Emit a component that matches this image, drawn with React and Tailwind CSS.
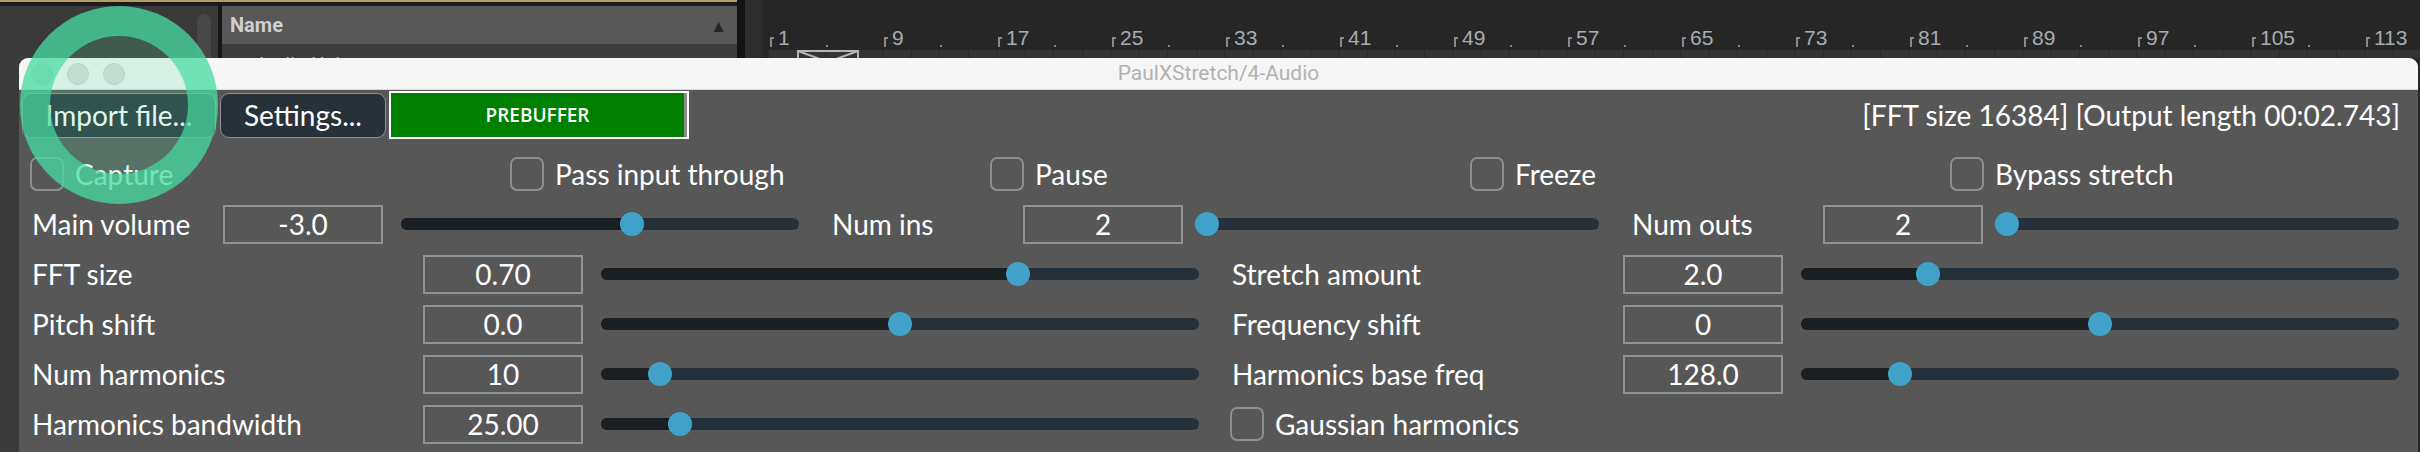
import React from "react";

const UI = { fontFamily: "Lato, 'Open Sans', sans-serif" };
const RULER = { fontFamily: "'Liberation Sans', Arial, sans-serif" };
const TITLE = { fontFamily: "Roboto, 'Liberation Sans', sans-serif" };

const rulerLabels = [1, 9, 17, 25, 33, 41, 49, 57, 65, 73, 81, 89, 97, 105, 113];

function Slider({ className, value }) {
  const w = className.includes("598") ? 598 : 398;
  const pos = 6 + value * (w - 12);
  return (
    <div className={"relative h-[24px] shrink-0 " + className}>
      <div className="absolute left-0 right-0 top-[6px] h-[12px] rounded-full bg-[#25313a]" />
      <div
        className="absolute left-0 top-[6px] h-[12px] rounded-l-full bg-[#1a1f23]"
        style={{ width: pos }}
      />
      <div
        className="absolute top-0 h-[24px] w-[24px] rounded-full bg-[#41a2c9]"
        style={{ left: pos - 12 }}
      />
    </div>
  );
}

function ValueBox({ children }) {
  return (
    <div className="flex h-[39px] w-[160px] shrink-0 items-center justify-center border-2 border-[#8b9595] text-[28px] leading-none text-white">
      {children}
    </div>
  );
}

function Check({ label }) {
  return (
    <div className="flex items-center">
      <div className="h-[34px] w-[34px] shrink-0 rounded-[7px] border-2 border-[#8e8e8e]" />
      <span className="ml-[11px] text-[28px] leading-none text-white">{label}</span>
    </div>
  );
}

function Group3({ label, value }) {
  return (
    <div className="flex w-[767px] items-center">
      <span className="w-[191px] shrink-0 text-[28px] leading-none text-white">{label}</span>
      <ValueBox>{value}</ValueBox>
      <div className="ml-[18px]">
        <Slider className="w-[398px]" value={0} />
      </div>
    </div>
  );
}

function Group2({ label, value, pos }) {
  return (
    <div className="flex w-[1167px] items-center">
      <span className="w-[391px] shrink-0 text-[28px] leading-none text-white">{label}</span>
      <ValueBox>{value}</ValueBox>
      <div className="ml-[18px]">
        <Slider className="w-[598px]" value={pos} />
      </div>
    </div>
  );
}

function RulerSeg({ n }) {
  return (
    <div className="relative flex h-[50px] w-[114px] shrink-0 items-start">
      <div className="mt-[37px] h-[10px] w-[4px] border-l-2 border-t-2 border-[#8a8a8a]" />
      <span className="ml-[4px] mt-[27px] text-[21px] leading-none text-[#a6acb2]">{n}</span>
      <div className="absolute left-[56px] top-[45px] h-[2px] w-[2px] bg-[#8a8a8a]" />
    </div>
  );
}

export default function App() {
  const cells = Array.from({ length: 60 });
  return (
    <div className="relative h-[452px] w-[2420px] overflow-hidden bg-[#262626]" style={UI}>
      {/* DAW background */}
      <div className="flex h-full w-full">
        {/* left panel */}
        <div className="flex h-full w-[218px] shrink-0 flex-col bg-[#3a3a3a]">
          <div className="h-[2px] w-full bg-[#b59b6c]" />
          <div className="h-[4px] w-full bg-[#1c1c1c]" />
          <div className="flex flex-1 justify-end pr-[7px] pt-[8px]">
            <div className="h-[200px] w-[14px] rounded-full bg-[#474747]" />
          </div>
        </div>
        <div className="flex h-full w-[4px] shrink-0 flex-col bg-[#161616]">
          <div className="h-[2px] w-full bg-[#b59b6c]" />
        </div>
        {/* browser panel */}
        <div className="flex h-full w-[515px] shrink-0 flex-col bg-[#3d3d3d]">
          <div className="h-[2px] w-full bg-[#b59b6c]" />
          <div className="h-[4px] w-full bg-[#1c1c1c]" />
          <div className="flex h-[38px] items-center justify-between bg-[#585858] pl-[8px] pr-[10px]">
            <span className="text-[20px] font-bold text-[#cfcfcf]" style={TITLE}>Name</span>
            <span className="text-[17px] leading-none text-[#262626]">▲</span>
          </div>
          <div className="flex items-center pl-[10px] pt-[6px] text-[20px] text-[#b8b8b8]" style={TITLE}>
            <span className="text-[13px]">▼</span>
            <span className="ml-[10px]">Audio Units</span>
          </div>
        </div>
        <div className="h-full w-[8px] shrink-0 bg-[#141414]" />
        <div className="h-full w-[17px] shrink-0 bg-[#2d2d2d]" />
        {/* timeline */}
        <div className="flex flex-1 flex-col" style={RULER}>
          <div className="flex pl-[8px]">
            {rulerLabels.map((n) => (
              <RulerSeg key={n} n={n} />
            ))}
          </div>
          <div className="relative flex h-[8px] pl-[6px]">
            {cells.map((_, i) => (
              <div key={i} className="h-[8px] w-[28.5px] shrink-0 border-l border-[#262626] bg-[#333333]" />
            ))}
            <svg className="absolute left-[35px] top-0" width="62" height="8" viewBox="0 0 62 8">
              <path d="M1 8 V1 H61 V8 M1 1 L31 12 M61 1 L31 12" stroke="#b5b5b5" strokeWidth="2" fill="none" />
            </svg>
          </div>
        </div>
      </div>

      {/* Plugin window */}
      <div className="absolute left-[19px] top-[58px] flex h-[394px] w-[2399px] flex-col overflow-hidden rounded-t-[9px] bg-[#575757]">
        <div className="grid h-[32px] shrink-0 grid-cols-[1fr_auto_1fr] items-center border-b border-[#d9d9d9] bg-[#f6f6f6]">
          <div className="flex items-center gap-[14px] pl-[12px]">
            <div className="h-[22px] w-[22px] rounded-full border border-[#cfcfcf] bg-[#dddddd]" />
            <div className="h-[22px] w-[22px] rounded-full border border-[#cfcfcf] bg-[#dddddd]" />
            <div className="h-[22px] w-[22px] rounded-full border border-[#cfcfcf] bg-[#dddddd]" />
          </div>
          <span className="text-[21px] leading-none text-[#b2b2b2]" style={TITLE}>PaulXStretch/4-Audio</span>
          <div />
        </div>

        <div className="flex flex-col px-[3px]">
          {/* buttons row */}
          <div className="flex h-[50px] items-center">
            <div className="flex h-[45px] w-[194px] items-center justify-center rounded-[9px] border border-[#8a9095] bg-[#27313a] text-[28px] leading-none text-white">
              Import file...
            </div>
            <div className="ml-[4px] flex h-[45px] w-[166px] items-center justify-center rounded-[9px] border border-[#8a9095] bg-[#27313a] text-[28px] leading-none text-white">
              Settings...
            </div>
            <div className="ml-[3px] flex h-[48px] w-[300px] border-2 border-white bg-[#008000]">
              <div className="flex flex-1 items-center justify-center text-[19px] leading-none text-white" style={{ fontFamily: "'Open Sans', sans-serif", fontWeight: 600 }}>
                PREBUFFER
              </div>
              <div className="w-[3px] bg-[#8c8c8c]" />
            </div>
            <span className="ml-auto pr-[15px] text-[28px] leading-none text-white">
              [FFT size 16384] [Output length 00:02.743]
            </span>
          </div>

          {/* checkbox row */}
          <div className="mt-[9px] grid h-[50px] grid-cols-[repeat(5,480px)] items-center pl-[8px]">
            <Check label="Capture" />
            <Check label="Pass input through" />
            <Check label="Pause" />
            <Check label="Freeze" />
            <Check label="Bypass stretch" />
          </div>

          {/* main volume row */}
          <div className="flex h-[50px] items-center gap-[33px] pl-[10px]">
            <div className="flex w-[767px] items-center">
              <span className="w-[191px] shrink-0 text-[28px] leading-none text-white">Main volume</span>
              <ValueBox>-3.0</ValueBox>
              <div className="ml-[18px]">
                <Slider className="w-[398px]" value={0.583} />
              </div>
            </div>
            <Group3 label="Num ins" value="2" />
            <Group3 label="Num outs" value="2" />
          </div>

          <div className="flex h-[50px] items-center gap-[33px] pl-[10px]">
            <Group2 label="FFT size" value="0.70" pos={0.701} />
            <Group2 label="Stretch amount" value="2.0" pos={0.2065} />
          </div>
          <div className="flex h-[50px] items-center gap-[33px] pl-[10px]">
            <Group2 label="Pitch shift" value="0.0" pos={0.5} />
            <Group2 label="Frequency shift" value="0" pos={0.5} />
          </div>
          <div className="flex h-[50px] items-center gap-[33px] pl-[10px]">
            <Group2 label="Num harmonics" value="10" pos={0.0906} />
            <Group2 label="Harmonics base freq" value="128.0" pos={0.159} />
          </div>
          <div className="flex h-[50px] items-center gap-[33px] pl-[10px]">
            <Group2 label="Harmonics bandwidth" value="25.00" pos={0.125} />
            <div className="-ml-[2px]">
              <Check label="Gaussian harmonics" />
            </div>
          </div>
        </div>
      </div>

      {/* cursor highlight ring */}
      <div className="pointer-events-none absolute left-[20px] top-[6px] h-[198px] w-[198px] rounded-full border-[30px] border-[rgba(70,220,160,0.7)] bg-[rgba(90,220,170,0.2)]" />
    </div>
  );
}
